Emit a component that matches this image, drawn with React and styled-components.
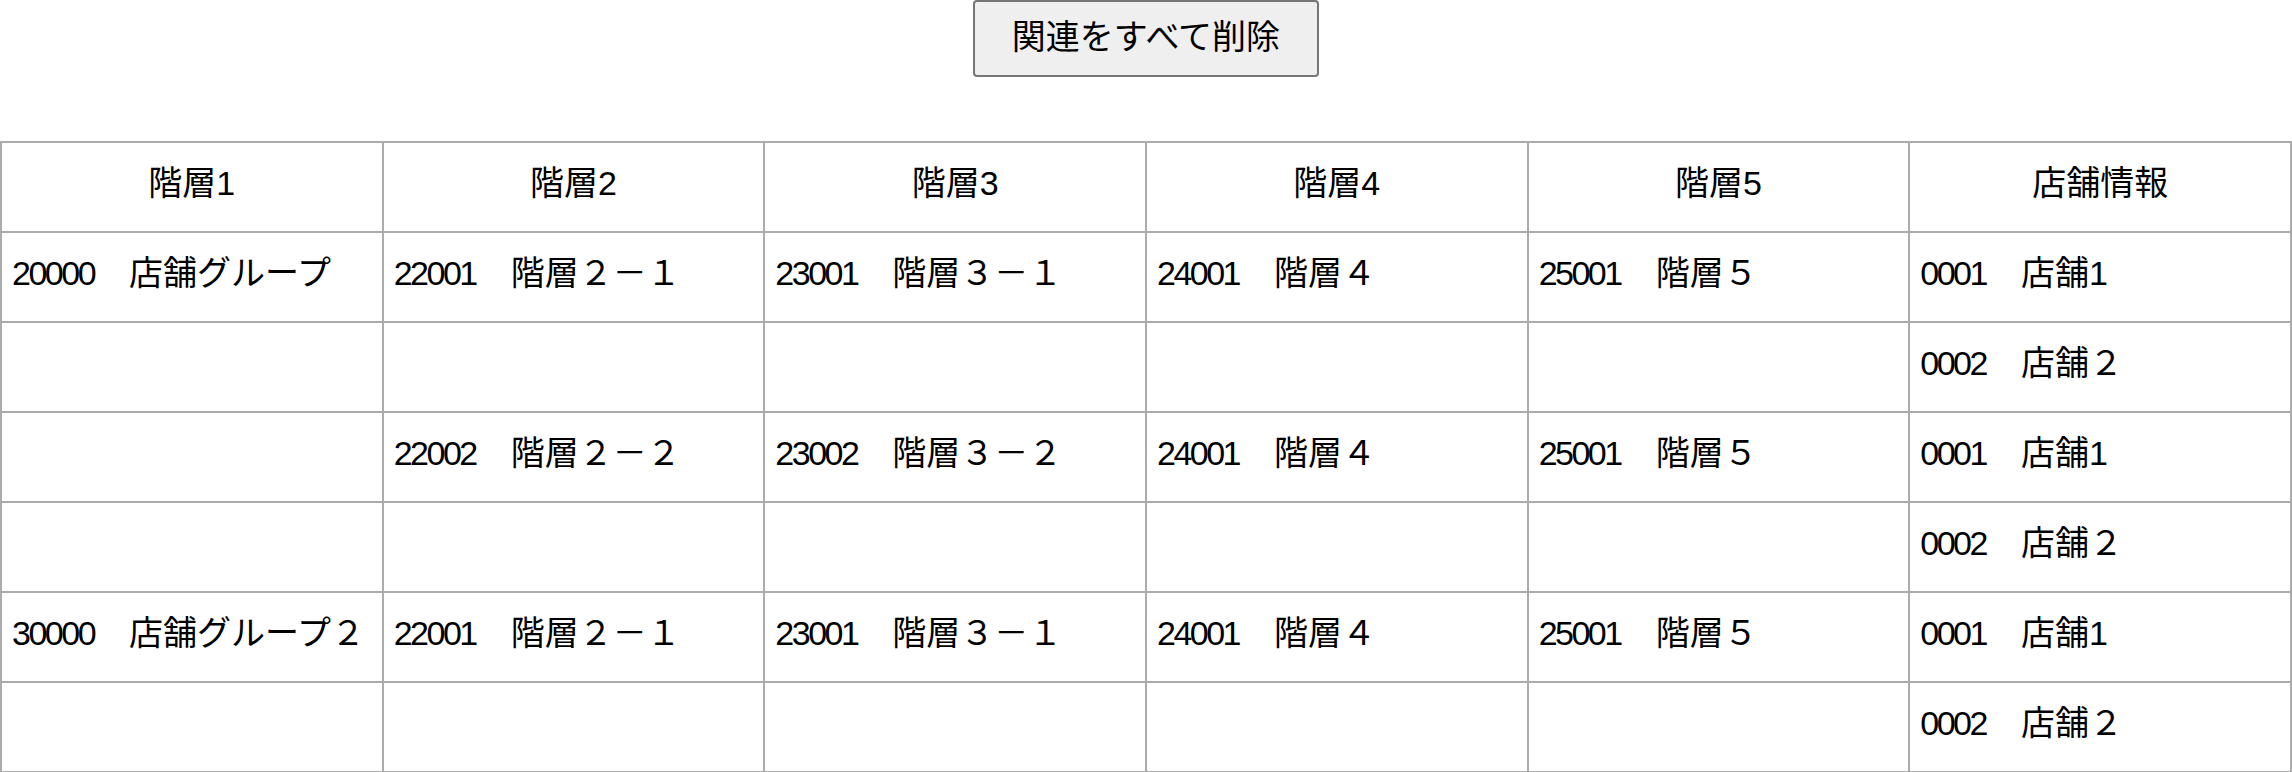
import React from 'react';
import styled, {createGlobalStyle} from 'styled-components';

const GlobalStyle = createGlobalStyle`
    html, body {
        margin: 0;
        padding: 0;
        background: #fff;
    }
    body {
        font-family: "Liberation Sans", "Noto Sans CJK JP", sans-serif;
        color: #000;
    }
`;

const Page = styled.div`
    display: flex;
    flex-direction: column;
    align-items: center;
    gap: 64px;
`;

const ActionButton = styled.button`
    width: 346px;
    height: 77px;
    padding: 0 0 4px;
    font-family: inherit;
    font-size: 34px;
    line-height: 1;
    color: #000;
    background: #efefef;
    border: 2px solid #767676;
    border-radius: 4px;
    cursor: pointer;
`;

const Grid = styled.table`
    width: 100%;
    table-layout: fixed;
    border-collapse: collapse;
    font-size: 34px;
    line-height: 1;
`;

const HeadCell = styled.th`
    height: 80px;
    padding: 0 10px 8px;
    font-weight: normal;
    text-align: center;
    vertical-align: middle;
    border: 2px solid #ababab;
`;

const Cell = styled.td`
    height: 80px;
    padding: 0 10px 8px;
    text-align: left;
    vertical-align: middle;
    white-space: nowrap;
    border: 2px solid #ababab;
`;

// the codes are set a bit tighter than the body font
const Code = styled.span`
    letter-spacing: -2.5px;
    margin-right: 1px;
`;

const headers = ['階層1', '階層2', '階層3', '階層4', '階層5', '店舗情報'];

const rows = [
    [['20000', '店舗グループ'], ['22001', '階層２－１'], ['23001', '階層３－１'], ['24001', '階層４'], ['25001', '階層５'], ['0001', '店舗1']],
    [null, null, null, null, null, ['0002', '店舗２']],
    [null, ['22002', '階層２－２'], ['23002', '階層３－２'], ['24001', '階層４'], ['25001', '階層５'], ['0001', '店舗1']],
    [null, null, null, null, null, ['0002', '店舗２']],
    [['30000', '店舗グループ２'], ['22001', '階層２－１'], ['23001', '階層３－１'], ['24001', '階層４'], ['25001', '階層５'], ['0001', '店舗1']],
    [null, null, null, null, null, ['0002', '店舗２']],
];

export default function App() {
    return (
        <>
            <GlobalStyle/>
            <Page>
                <ActionButton type="button">関連をすべて削除</ActionButton>
                <Grid>
                    <thead>
                        <tr>
                            {headers.map(h => <HeadCell key={h}>{h}</HeadCell>)}
                        </tr>
                    </thead>
                    <tbody>
                        {rows.map((row, i) => (
                            <tr key={i}>
                                {row.map((item, j) => (
                                    <Cell key={j}>
                                        {item && (
                                            <>
                                                <Code>{item[0]}</Code>
                                                {'　'}{item[1]}
                                            </>
                                        )}
                                    </Cell>
                                ))}
                            </tr>
                        ))}
                    </tbody>
                </Grid>
            </Page>
        </>
    );
}
